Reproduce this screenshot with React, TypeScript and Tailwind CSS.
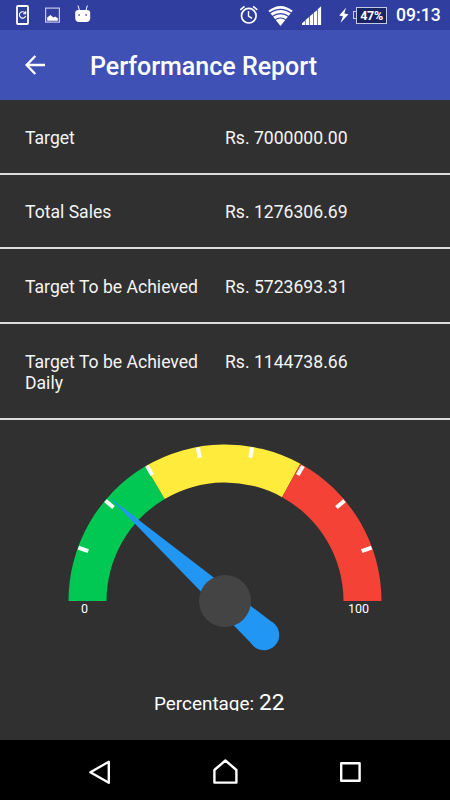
import { clsx } from 'clsx';

interface ReportRow {
  label: string;
  value: string;
  box: string;
}

const rows: ReportRow[] = [
  { label: 'Target', value: 'Rs. 7000000.00', box: 'h-[75px] pt-[28px]' },
  { label: 'Total Sales', value: 'Rs. 1276306.69', box: 'h-[74px] pt-[27px]' },
  { label: 'Target To be Achieved', value: 'Rs. 5723693.31', box: 'h-[75px] pt-[28px]' },
  { label: 'Target To be Achieved Daily', value: 'Rs. 1144738.66', box: 'h-[96px] pt-[28px]' },
];

// Gauge geometry, in svg units
const CX = 157;
const CY = 157;
const OUTER = 156.5;
const INNER = 118.5;

const segments = [
  { from: 0, to: 33, color: '#00c853' },
  { from: 33, to: 66, color: '#ffeb3b' },
  { from: 66, to: 100, color: '#f44336' },
];

const ticks = [20, 40, 60, 80, 100, 120, 140, 160];

const polar = (radius: number, degrees: number) => {
  const rad = (degrees * Math.PI) / 180;
  return `${(CX - radius * Math.cos(rad)).toFixed(2)} ${(CY - radius * Math.sin(rad)).toFixed(2)}`;
};

const arcPath = (from: number, to: number) => {
  const a = from * 1.8;
  const b = to * 1.8;
  return `M${polar(OUTER, a)}A${OUTER} ${OUTER} 0 0 1 ${polar(OUTER, b)}L${polar(INNER, b)}A${INNER} ${INNER} 0 0 0 ${polar(INNER, a)}Z`;
};

function StatusBar() {
  return (
    <div className="flex h-[30px] items-center bg-[#303f9f] text-white">
      <svg className="ml-4 h-[30px] w-[76px]" viewBox="16 0 76 30" fill="none">
        <rect x="17" y="6" width="11" height="18" rx="0.8" stroke="#fff" strokeWidth="1.8" />
        <path d="M25.3 13.1a3.2 3.2 0 1 0 .4 2.8M25.7 11.3v2.5h-2.6" stroke="#fff" strokeWidth="1.1" />
        <rect x="45.6" y="8.1" width="13.8" height="14" stroke="#c5cae9" strokeWidth="1.2" />
        <path d="M47.2 20.7v-3.2l3.3-2.5 2.8 2.4 1.8-1 2.7 1.8v2.5z" fill="#fff" />
        <path d="M75.2 13q0-3 3-3h9q3 0 3 3v5q0 4-4 4h-7q-4 0-4-4z" fill="#fff" />
        <path d="M79.5 10.5 78 5.5M86 10.5l1.3-5" stroke="#fff" strokeWidth="1" />
        <path d="M78.3 14.2h1.7v1.6h-1.7zM85.3 14.2H87v1.6h-1.7z" fill="#5563ad" />
      </svg>
      <svg className="ml-auto h-[30px] w-[112px]" viewBox="237 0 112 30" fill="none">
        <circle cx="248.8" cy="15.7" r="7.3" stroke="#fff" strokeWidth="1.7" />
        <path d="M248.5 11v5.1l3.6 2.2" stroke="#fff" strokeWidth="1.4" />
        <path d="m240.3 9.8 4.2-3.5M253.1 6.3l4.2 3.5" stroke="#fff" strokeWidth="1.6" />
        <path d="M268.4 10.8Q280.5 1.4 292.7 10.8L280.5 26z" fill="#fff" />
        <path d="M269.3 13.3Q280.5 5.4 291.7 13.3M271.8 16.7Q280.5 10.5 289.2 16.7M274.7 20.1Q280.5 15.8 286.3 20.1" stroke="#303f9f" strokeWidth="1.1" />
        <path d="M302 25v-1.8l3-2.5V25zM305.6 25v-5.1l3.5-2.8V25zM309.8 25v-8.8l3.3-2.6V25zM313.8 25V12.7l3.2-2.5V25zM317.7 25V9.2l3.4-3V25z" fill="#fff" />
        <path d="m346 7.8-6.8 7.7 3.7.8-2.3 6.4 7.9-8.4-4.2-.7z" fill="#fff" />
      </svg>
      <div className="ml-1 flex items-center">
        <div className="h-2 w-[3px] border border-r-0 border-[#c5cae9]" />
        <div className="h-[17px] w-[31px] border border-[#c5cae9] bg-[#1a2364] text-center text-[12.5px] leading-[15px] font-bold tracking-[-0.3px]">
          47%
        </div>
      </div>
      <span className="mr-[10px] ml-[9px] w-[44px] pt-px text-[17.6px] leading-none font-medium whitespace-nowrap">09:13</span>
    </div>
  );
}

function Header() {
  return (
    <header className="flex h-[70px] items-center bg-[#3f51b5] pb-[2px] pl-[25px] text-white">
      <svg className="mt-[2px] h-5 w-[21px]" viewBox="0 0 21 20" fill="none" stroke="#fff" strokeWidth="2.3">
        <path d="M20 10H1.8M10.3 1 1.6 10l8.7 9" />
      </svg>
      <h1 className="mt-[5px] ml-11 text-[25px] leading-[30px] font-medium">Performance Report</h1>
    </header>
  );
}

function Gauge() {
  return (
    <svg className="mt-[24px] ml-[68px] h-[210px] w-[314px]" viewBox="0 0 314 210">
      {segments.map((segment) => (
        <path key={segment.color} d={arcPath(segment.from, segment.to)} fill={segment.color} />
      ))}
      {ticks.map((degrees) => (
        <path key={degrees} d={`M${polar(156, degrees)}L${polar(145.5, degrees)}`} stroke="#fff" strokeWidth="4" />
      ))}
      {/* Needle, its round tail and the hub on top */}
      <path d="M41.5 53.5 205.5 179.3A15 15 0 0 1 185.3 201.5Z" fill="#2196f3" />
      <circle cx="196" cy="191" r="15.2" fill="#2196f3" />
      <circle cx={CX} cy={CY} r="26" fill="#444" />
      <text x="16.5" y="169" textAnchor="middle" fill="#fff" fontSize="12.5">0</text>
      <text x="290.5" y="169" textAnchor="middle" fill="#fff" fontSize="12.5">100</text>
    </svg>
  );
}

function NavigationBar() {
  return (
    <nav className="grid h-[60px] grid-cols-3 bg-black px-[37px]">
      <svg className="mx-auto h-[60px] w-10" viewBox="80 740 40 60" fill="none" stroke="#fff" strokeWidth="2.4" strokeLinejoin="round">
        <path d="M108.8 761.8v21L90.4 772.3z" />
      </svg>
      <svg className="mx-auto h-[60px] w-10" viewBox="205 740 40 60" fill="none" stroke="#fff" strokeWidth="2.4" strokeLinejoin="round">
        <path d="M214.4 770v12.6h22V770l-11-9.5z" />
      </svg>
      <svg className="mx-auto h-[60px] w-10" viewBox="330 740 40 60" fill="none" stroke="#fff" strokeWidth="2.4" strokeLinejoin="round">
        <path d="M341.2 763.2h18.4v17.6h-18.4z" />
      </svg>
    </nav>
  );
}

export default function App() {
  return (
    <div className="flex h-[800px] w-[450px] flex-col overflow-hidden bg-[#303030] font-['Roboto',sans-serif] text-white">
      <StatusBar />
      <Header />
      <main className="flex flex-1 flex-col">
        {rows.map((row) => (
          <div
            key={row.label}
            className={clsx('grid grid-cols-2 border-b-2 border-[#dcdcdc] pl-[25px] text-[17.6px] leading-[21px] text-[#f4f4f4]', row.box)}
          >
            <span className="w-[180px]">{row.label}</span>
            <span className="-ml-[12.5px]">{row.value}</span>
          </div>
        ))}
        <Gauge />
        {/* The descenders are clipped at the baseline */}
        <div className="mt-[33px] flex h-[24px] items-baseline overflow-hidden pt-[5px] pl-[154px] leading-[22px]">
          <span className="text-[18.9px]">Percentage:</span>
          <span className="ml-[5px] text-[22.7px]">22</span>
        </div>
      </main>
      <NavigationBar />
    </div>
  );
}
